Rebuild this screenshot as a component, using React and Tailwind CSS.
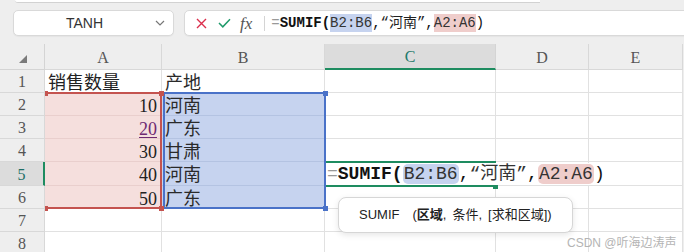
import React from "react";

const SERIF = "font-['Liberation_Serif','Noto_Sans_CJK_SC',serif]";
const MONO = "font-['Liberation_Mono','Noto_Sans_CJK_SC',monospace]";
const SANS = "font-['Liberation_Sans','Noto_Sans_CJK_SC',sans-serif]";

const letters = ["", "A", "B", "C", "D", "E"];
const data = [
  ["销售数量", "产地"],
  ["10", "河南"],
  ["20", "广东"],
  ["30", "甘肃"],
  ["40", "河南"],
  ["50", "广东"],
  [],
  [],
];

function HeaderRow() {
  return (
    <>
      <div className="relative bg-[#eeeeee] border-r border-b border-[#d4d4d4]">
        <svg className="absolute left-[19px] top-[11px]" width="8" height="8" viewBox="0 0 8 8">
          <polygon points="8,0 8,8 0,8" fill="#7a7a7a" />
        </svg>
      </div>
      {letters.slice(1).map((l) => {
        const sel = l === "C";
        return (
          <div
            key={l}
            className={
              sel
                ? `flex items-center justify-center bg-[#dcdcdc] border-r border-[#d4d4d4] border-b-2 border-b-[#1e8c60] text-[#1f7a6b] text-[16px] ${SERIF}`
                : `flex items-center justify-center bg-[#eeeeee] border-r border-b border-[#d8d8d8] text-[#555] text-[16px] ${SERIF}`
            }
          >
            <span className="pt-[2px]">{l}</span>
          </div>
        );
      })}
    </>
  );
}

function Row({ idx, cells }) {
  const n = idx + 1;
  const sel = n === 5;
  const inRange = n >= 2 && n <= 6;
  return (
    <>
      <div
        className={
          sel
            ? `flex items-center justify-center bg-[#dcdcdc] border-b border-[#d8d8d8] border-r-2 border-r-[#1e8c60] text-[#1f6f66] text-[16px] ${SERIF}`
            : `flex items-center justify-center bg-[#eeeeee] border-b border-r border-[#d8d8d8] text-[#555] text-[16px] ${SERIF}`
        }
      >
        <span className="pt-[2px]">{n}</span>
      </div>
      {/* Column A */}
      <div
        className={
          inRange
            ? `flex items-center justify-end pr-[4px] pt-[3px] bg-[#f5dfdd] border-r border-b border-[#e9cfcd] text-[18px] leading-[20px] text-[#222] ${SERIF}`
            : `flex items-center pl-[3px] pt-[3px] bg-white border-r border-b border-[#e1e1e1] text-[18px] leading-[20px] text-[#222] ${SERIF}`
        }
      >
        {n === 3 ? (
          <span className="text-[#6e2a72] underline underline-offset-[2px] decoration-[#6e2a72]">{cells[0]}</span>
        ) : (
          cells[0]
        )}
      </div>
      {/* Column B */}
      <div
        className={
          inRange
            ? `flex items-center pl-[3px] pt-[3px] bg-[#c6d3ef] border-r border-b border-[#b4c3e2] text-[18px] leading-[20px] text-[#2a2a2a] ${SERIF}`
            : `flex items-center pl-[3px] pt-[3px] bg-white border-r border-b border-[#e1e1e1] text-[18px] leading-[20px] text-[#2a2a2a] ${SERIF}`
        }
      >
        {cells[1]}
      </div>
      <div className="bg-white border-r border-b border-[#e1e1e1]" />
      <div className="bg-white border-r border-b border-[#e1e1e1]" />
      <div className="bg-white border-r border-b border-[#e1e1e1]" />
    </>
  );
}

function Formula({ big }) {
  if (big) {
    return (
      <div className={`flex items-center text-[18px] leading-[20px] text-[#111] ${MONO}`}>
        <span className="text-[#999]">=</span>
        <span className="font-bold">SUMIF(</span>
        <span className="rounded-[5px] bg-[#c6d3ef] px-[1px] text-[#333]">B2:B6</span>
        <span>,</span>
        <span className="text-[#333]">“河南”</span>
        <span>,</span>
        <span className="rounded-[5px] bg-[#efcdcb] px-[1px] text-[#333]">A2:A6</span>
        <span>)</span>
      </div>
    );
  }
  return (
    <div className={`flex items-center text-[14px] leading-[18px] text-[#111] ${MONO}`}>
      <span className="text-[#999]">=</span>
      <span className="font-bold">SUMIF(</span>
      <span className="bg-[#c6d3ef] text-[#333]">B2:B6</span>
      <span>,</span>
      <span className="text-[#222]">“河南”</span>
      <span>,</span>
      <span className="bg-[#efcdcb] text-[#333]">A2:A6</span>
      <span>)</span>
    </div>
  );
}

export default function App() {
  return (
    <div className="w-[684px] h-[252px] overflow-hidden bg-[#eeeeee] flex flex-col">
      {/* toolbar */}
      <div className="h-[44px] flex flex-col shrink-0">
        <div className="ml-[15px] w-[525px] h-[3px] bg-white border-b border-[#d2d2d2] rounded-bl-[4px]" />
        <div className="mt-[7px] flex items-center h-[26px]">
          <div className="ml-[13px] w-[161px] h-[26px] shrink-0 rounded-[5px] border border-[#d9d9d9] bg-white flex items-center shadow-[0_1px_1px_rgba(0,0,0,0.04)]">
            <div className={`flex-1 text-center text-[14px] text-[#333] ${SANS}`}>TANH</div>
            <svg className="mr-[8px]" width="10" height="6" viewBox="0 0 10 6">
              <polyline points="1,1 5,5 9,1" fill="none" stroke="#777" strokeWidth="1.2" />
            </svg>
          </div>
          <div className="ml-[10px] w-[540px] h-[26px] rounded-[5px] border border-[#d9d9d9] bg-white flex items-center shrink-0 shadow-[0_1px_1px_rgba(0,0,0,0.04)]">
            <svg className="ml-[11px]" width="11" height="11" viewBox="0 0 11 11">
              <path d="M1 1 L10 10 M10 1 L1 10" stroke="#db2e4c" strokeWidth="1.4" fill="none" />
            </svg>
            <svg className="ml-[11px]" width="13" height="10" viewBox="0 0 13 10">
              <polyline points="1,5 4.8,8.8 12,1.2" stroke="#1f9a6b" strokeWidth="1.5" fill="none" />
            </svg>
            <span className={`ml-[9px] italic text-[17px] leading-none text-[#555] font-['Liberation_Serif',serif]`}>fx</span>
            <div className="ml-[12px] w-px h-[15px] bg-[#d4d4d4]" />
            <div className="ml-[6px]">
              <Formula />
            </div>
          </div>
        </div>
      </div>

      {/* grid */}
      <div className="relative">
        <div className="grid grid-cols-[45px_117px_163px_171px_93px_94px] grid-rows-[26px_23px_23px_23px_23px_24px_23px_23px_23px]">
          <HeaderRow />
          {data.map((cells, i) => (
            <Row key={i} idx={i} cells={cells} />
          ))}
        </div>

        {/* range A2:A6 */}
        <div className="absolute left-[45px] top-[48px] w-[117px] h-[117px] border-t-2 border-r-2 border-b-2 border-[#c4534f]" />
        {/* range B2:B6 */}
        <div className="absolute left-[163px] top-[48px] w-[163px] h-[117px] border-2 border-[#4a72c8]" />
        {/* handles */}
        <div className="absolute left-[45px] top-[47px] w-[3px] h-[5px] bg-[#c4534f]" />
        <div className="absolute left-[45px] top-[162px] w-[3px] h-[5px] bg-[#c4534f]" />
        <div className="absolute left-[159px] top-[47px] w-[5px] h-[5px] bg-[#c4534f]" />
        <div className="absolute left-[159px] top-[162px] w-[5px] h-[5px] bg-[#c4534f]" />
        <div className="absolute left-[323px] top-[47px] w-[5px] h-[5px] bg-[#4a72c8]" />
        <div className="absolute left-[323px] top-[162px] w-[5px] h-[5px] bg-[#4a72c8]" />

        {/* editing cell C5 */}
        <div className="absolute left-[326px] top-[119px] w-[286px] h-[22px] bg-white flex items-center pl-[1px]">
          <Formula big />
        </div>
        <div className="absolute left-[326px] top-[117px] w-[170px] h-[2px] bg-[#1e8c60]" />
        <div className="absolute left-[326px] top-[141px] w-[170px] h-[2px] bg-[#1e8c60]" />
        <div className="absolute left-[493px] top-[141px] w-[5px] h-[4px] bg-[#1e8c60]" />

        {/* tooltip */}
        <div className={`absolute left-[338px] top-[153px] w-[235px] h-[36px] rounded-[8px] border border-[#d6d6d6] bg-white shadow-[0_2px_6px_rgba(0,0,0,0.10)] flex items-center pl-[20px] text-[13px] text-[#222] ${SANS}`}>
          <span>SUMIF</span>
          <span className="ml-[13px]">(</span>
          <span className="font-bold">区域</span>
          <span>,</span>
          <span className="ml-[6px]">条件,</span>
          <span className="ml-[6px]">[求和区域])</span>
        </div>

        {/* watermark */}
        <div className={`absolute left-[567px] top-[190px] text-[12px] text-[#b4b4b4] ${SANS}`}>CSDN @听海边涛声</div>
      </div>
    </div>
  );
}
